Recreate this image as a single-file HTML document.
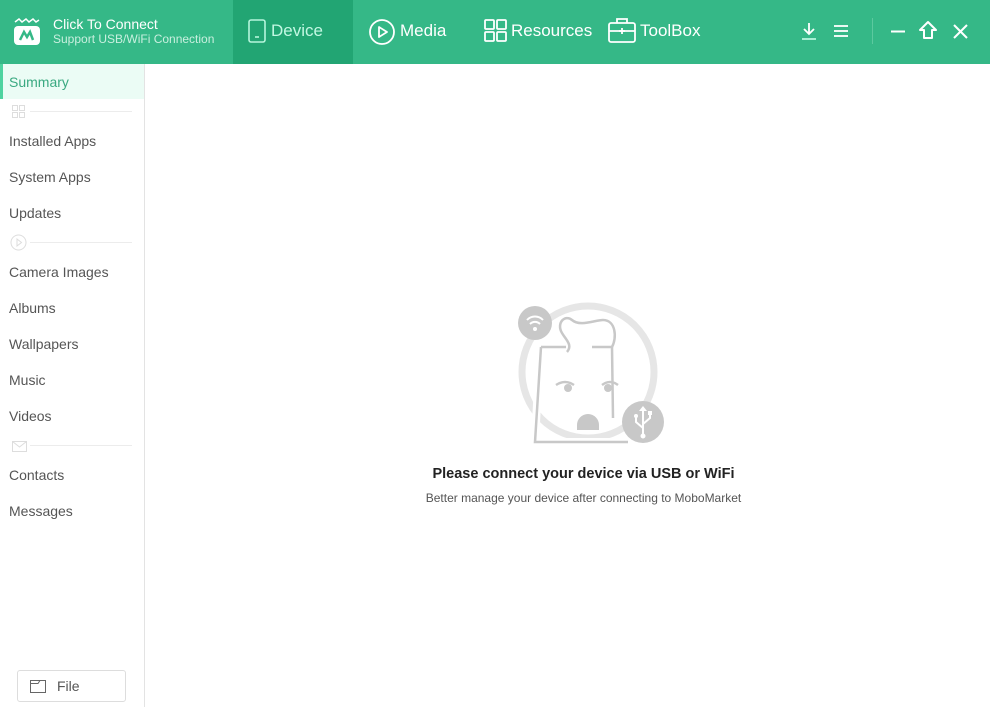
<!DOCTYPE html>
<html><head><meta charset="utf-8"><style>
*{margin:0;padding:0;box-sizing:border-box}
body{width:990px;height:707px;overflow:hidden;background:#fff;font-family:"Liberation Sans",sans-serif;position:relative}
.hdr{position:absolute;left:0;top:0;width:990px;height:64px;background:#35b887;color:#fff}
.abs{position:absolute}
.side{position:absolute;left:0;top:64px;width:145px;height:643px;border-right:1px solid #e3e3e3;background:#fff}
.it{position:absolute;left:9px;font-size:14px;color:#555}
.sep{position:absolute;left:30px;width:102px;height:1px;background:#ececec}
</style></head><body>
<div class="hdr">
 <svg class="abs" style="left:12px;top:17px" width="30" height="30" viewBox="0 0 30 30">
  <path d="M3 5 L7 2 L10 5 L14 2 L17 5 L21 2 L24 5 L27 3" stroke="#fff" stroke-width="1.5" fill="none"/>
  <rect x="2" y="9" width="26" height="19" rx="4" fill="#fff"/>
  <path d="M8 23 L12 15 L15 20 L18 15 L21 23" stroke="#35b887" stroke-width="2.5" fill="none"/>
 </svg>
 <div class="abs" style="left:53px;top:16px;font-size:14px">Click To Connect</div>
 <div class="abs" style="left:53px;top:32px;font-size:12px;color:#c9efdf">Support USB/WiFi Connection</div>
 <div class="abs" style="left:233px;top:0;width:120px;height:64px;background:#22a573"></div>
 <svg class="abs" style="left:247px;top:19px" width="20" height="24" viewBox="0 0 20 24"><rect x="2" y="1" width="16" height="22" rx="2" stroke="#b6f5dc" stroke-width="1.6" fill="none"/><line x1="8" y1="18" x2="12" y2="18" stroke="#b6f5dc" stroke-width="1.6"/></svg>
 <div class="abs" style="left:271px;top:21px;font-size:17px;color:#c2f7e2">Device</div>
 <svg class="abs" style="left:368px;top:18px" width="28" height="28" viewBox="0 0 28 28"><circle cx="14" cy="14" r="12" stroke="#fff" stroke-width="1.8" fill="none"/><path d="M11 9 L19 14 L11 19 Z" stroke="#fff" stroke-width="1.8" fill="none" stroke-linejoin="round"/></svg>
 <div class="abs" style="left:400px;top:21px;font-size:17px">Media</div>
 <svg class="abs" style="left:484px;top:19px" width="24" height="24" viewBox="0 0 24 24" fill="none" stroke="#fff" stroke-width="1.8"><rect x="1" y="1" width="9" height="9" rx="1"/><rect x="13" y="1" width="9" height="9" rx="1"/><rect x="1" y="13" width="9" height="9" rx="1"/><rect x="13" y="13" width="9" height="9" rx="1"/></svg>
 <div class="abs" style="left:511px;top:21px;font-size:17px">Resources</div>
 <svg class="abs" style="left:608px;top:17px" width="28" height="26" viewBox="0 0 28 26" fill="none" stroke="#fff" stroke-width="1.8"><rect x="1" y="6" width="26" height="19" rx="2"/><path d="M9 6 V2 H19 V6"/><line x1="1" y1="14" x2="27" y2="14"/><line x1="14" y1="11" x2="14" y2="17"/><line x1="11" y1="14" x2="17" y2="14"/></svg>
 <div class="abs" style="left:640px;top:21px;font-size:17px">ToolBox</div>
 <svg class="abs" style="left:800px;top:22px" width="18" height="18" viewBox="0 0 18 18" stroke="#fff" stroke-width="1.8" fill="none"><path d="M9 1 V12 M4 7 L9 12 L14 7"/><line x1="2" y1="17" x2="16" y2="17" stroke="#b6f5dc"/></svg>
 <svg class="abs" style="left:833px;top:24px" width="16" height="14" viewBox="0 0 16 14" stroke="#fff" stroke-width="1.8"><line x1="1" y1="2" x2="15" y2="2"/><line x1="1" y1="7" x2="15" y2="7"/><line x1="1" y1="12" x2="15" y2="12"/></svg>
 <div class="abs" style="left:872px;top:18px;width:1px;height:26px;background:#5cc99f"></div>
 <svg class="abs" style="left:890px;top:30px" width="16" height="3"><line x1="1" y1="1.5" x2="15" y2="1.5" stroke="#fff" stroke-width="2"/></svg>
 <svg class="abs" style="left:918px;top:20px" width="20" height="20" viewBox="0 0 20 20" fill="none" stroke="#fff" stroke-width="2" stroke-linejoin="round"><path d="M2 10 L10 2 L18 10 H14 V18 H6 V10 Z"/></svg>
 <svg class="abs" style="left:952px;top:23px" width="17" height="17" viewBox="0 0 17 17" stroke="#fff" stroke-width="2"><line x1="2" y1="2" x2="15" y2="15"/><line x1="15" y1="2" x2="2" y2="15"/></svg>
</div>
<div class="side">
 <div class="abs" style="left:0;top:0;width:144px;height:35px;background:#ebfcf5;border-left:3px solid #4fd3a0"></div>
 <div class="it" style="top:10px;color:#3aa981">Summary</div>
 <svg class="abs" style="left:12px;top:41px" width="13" height="13" viewBox="0 0 13 13" fill="none" stroke="#ddd"><rect x=".5" y=".5" width="5" height="5"/><rect x="7.5" y=".5" width="5" height="5"/><rect x=".5" y="7.5" width="5" height="5"/><rect x="7.5" y="7.5" width="5" height="5"/></svg>
 <div class="sep" style="top:47px"></div>
 <div class="it" style="top:69px">Installed Apps</div>
 <div class="it" style="top:105px">System Apps</div>
 <div class="it" style="top:141px">Updates</div>
 <svg class="abs" style="left:10px;top:170px" width="17" height="17" viewBox="0 0 17 17" fill="none" stroke="#ddd"><circle cx="8.5" cy="8.5" r="7.5"/><path d="M7 5 L11.5 8.5 L7 12 Z"/></svg>
 <div class="sep" style="top:178px"></div>
 <div class="it" style="top:200px">Camera Images</div>
 <div class="it" style="top:236px">Albums</div>
 <div class="it" style="top:272px">Wallpapers</div>
 <div class="it" style="top:308px">Music</div>
 <div class="it" style="top:344px">Videos</div>
 <svg class="abs" style="left:12px;top:377px" width="15" height="11" viewBox="0 0 15 11" fill="none" stroke="#ddd"><rect x=".5" y=".5" width="14" height="10"/><path d="M.5 .5 L7.5 6 L14.5 .5"/></svg>
 <div class="sep" style="top:381px"></div>
 <div class="it" style="top:403px">Contacts</div>
 <div class="it" style="top:439px">Messages</div>
 <div class="abs" style="left:17px;top:606px;width:109px;height:32px;border:1px solid #ddd;border-radius:3px"></div>
 <svg class="abs" style="left:30px;top:616px" width="16" height="13" viewBox="0 0 16 13" fill="none" stroke="#666"><rect x=".5" y=".5" width="15" height="12"/><path d="M.5 3.5 H8 L10 .5"/></svg>
 <div class="it" style="left:57px;top:614px;color:#555">File</div>
</div>
<svg class="abs" style="left:510px;top:295px" width="160" height="150" viewBox="510 295 160 150">
 <circle cx="588" cy="372" r="66" stroke="#e6e6e6" stroke-width="7" fill="none"/>
 <path d="M540 347 H568 M592 347 H612 L613 418 M540 347 L535 442 H628" stroke="#fff" stroke-width="8" fill="none"/>
 <path d="M541 347 H566 M592 347 H612 L613 418 M541 347 L535 442 H628" stroke="#c8c8c8" stroke-width="2.5" fill="none"/>
 <path d="M567 352 C573 345 566 340 562 333 C556 323 565 314 572 320 C580 327 595 320 603 320 C616 320 617 338 612 347" stroke="#c8c8c8" stroke-width="2.5" fill="none"/>
 <circle cx="535" cy="323" r="17" fill="#c8c8c8"/>
 <path d="M527 320 a11 11 0 0 1 16 0 M530 324 a7 7 0 0 1 10 0" stroke="#fff" stroke-width="2" fill="none"/><circle cx="535" cy="329" r="2" fill="#fff"/>
 <path d="M556 385 Q565 379 574 385" stroke="#c8c8c8" stroke-width="2.5" fill="none"/><circle cx="568" cy="388" r="4" fill="#c8c8c8"/>
 <path d="M602 385 Q610 379 618 385" stroke="#c8c8c8" stroke-width="2.5" fill="none"/><circle cx="608" cy="388" r="4" fill="#c8c8c8"/>
 <path d="M577 430 V425 a11 11 0 0 1 22 0 V430 Z" fill="#c8c8c8"/>
 <circle cx="643" cy="422" r="21" fill="#c8c8c8"/>
 <path d="M643 408 V436 M643 428 L636 422 V417 M643 424 L650 418 V414" stroke="#fff" stroke-width="2" fill="none"/>
 <path d="M639 411 L643 406 L647 411 Z" fill="#fff"/><circle cx="636" cy="416" r="2" fill="#fff"/><rect x="648" y="411" width="4" height="4" fill="#fff"/><circle cx="643" cy="436" r="2.5" fill="#fff"/>
</svg>
<div class="abs" style="left:145px;width:877px;top:466px;text-align:center;font-size:14.5px;font-weight:bold;color:#222">Please connect your device via USB or WiFi</div>
<div class="abs" style="left:145px;width:877px;top:491px;text-align:center;font-size:12px;color:#555">Better manage your device after connecting to MoboMarket</div>
</body></html>
